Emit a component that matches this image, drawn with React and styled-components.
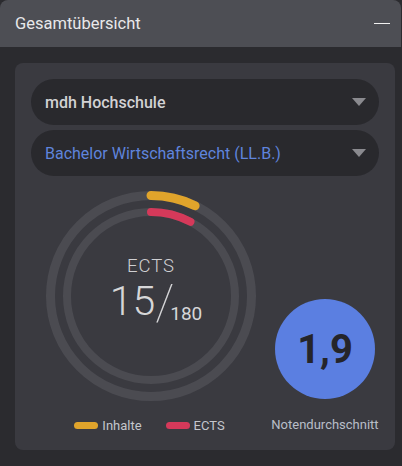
import React from "react";
import styled, { createGlobalStyle } from "styled-components";

const Global = createGlobalStyle`
  html, body { margin: 0; padding: 0; background: #2b2b2f; }
  body { font-family: Roboto, "Noto Sans", sans-serif; width: 402px; height: 466px; overflow: hidden; }
`;

const Panel = styled.div`
  width: 401px;
  height: 466px;
  background: #2b2b2f;
  border-radius: 8px 8px 0 0;
  overflow: hidden;
  display: flex;
  flex-direction: column;
`;

const Header = styled.div`
  height: 47px;
  flex: none;
  background: #4d4e54;
  display: flex;
  align-items: center;
  justify-content: space-between;
  padding: 0 11px 0 15px;
`;

const Title = styled.span`
  color: #e8e8ea;
  font-size: 16.5px;
  font-weight: 400;
  margin-top: -1px;
`;

const Minimize = styled.button`
  width: 16px;
  height: 16px;
  padding: 0;
  border: 0;
  background: transparent;
  display: flex;
  align-items: center;
  cursor: pointer;
  &::before {
    content: "";
    display: block;
    width: 16px;
    height: 1.5px;
    background: #f0f0f0;
  }
`;

const Body = styled.div`
  padding: 16px 6px 0 15px;
`;

const Card = styled.div`
  background: #3a3a40;
  border-radius: 8px;
  padding: 16px 16px 17px 16px;
  display: flex;
  flex-direction: column;
`;

const Select = styled.div`
  height: 46px;
  border-radius: 23px;
  background: #29292d;
  display: flex;
  align-items: center;
  justify-content: space-between;
  padding: 0 13px 0 14px;
  margin-bottom: ${(p) => (p.$last ? "0" : "5px")};
  color: ${(p) => (p.$accent ? "#5f84dc" : "#d2d2d4")};
  font-size: 16px;
  font-weight: ${(p) => (p.$accent ? 400 : 500)};
`;

const Caret = styled.span`
  width: 0;
  height: 0;
  border-left: 7.5px solid transparent;
  border-right: 7.5px solid transparent;
  border-top: 8px solid #8a8a8f;
`;

const Stats = styled.div`
  display: grid;
  grid-template-columns: 240px 108px;
  align-items: end;
  margin-top: 15px;
`;

const Column = styled.div`
  display: flex;
  flex-direction: column;
  align-items: center;
  gap: ${(p) => p.$gap}px;
`;

const RingWrap = styled.div`
  position: relative;
  width: 210px;
  height: 210px;
  display: flex;
  flex-direction: column;
  align-items: center;
  justify-content: center;
  padding-bottom: 6px;
  box-sizing: border-box;
  svg { position: absolute; inset: 0; }
`;

const RingLabel = styled.div`
  position: relative;
  color: #cfcfd2;
  font-size: 18.5px;
  font-weight: 300;
  letter-spacing: 1px;
  line-height: 20px;
`;

const RingValue = styled.div`
  position: relative;
  color: #d6d6d8;
  font-weight: 300;
  display: flex;
  align-items: baseline;
  line-height: 44px;
  margin-left: 10px;
`;

const Big = styled.span`
  font-size: 41px;
`;

const Slash = styled.span`
  font-size: 50px;
  font-weight: 100;
  position: relative;
  top: 5px;
  letter-spacing: -4px;
`;

const Small = styled.span`
  font-size: 19px;
  font-weight: 400;
  position: relative;
  top: 5px;
`;

const Legend = styled.div`
  display: flex;
  align-items: center;
  gap: 24px;
  height: 16px;
  margin-left: -3px;
`;

const LegendItem = styled.span`
  display: flex;
  align-items: center;
  gap: 4px;
  color: #c4c6cc;
  font-size: 13px;
  &::before {
    content: "";
    width: 24px;
    height: 7px;
    border-radius: 4px;
    background: ${(p) => p.$color};
  }
`;

const Grade = styled.div`
  width: 100px;
  height: 100px;
  border-radius: 50%;
  background: #5b7fe1;
  color: #25252a;
  font-size: 40px;
  font-weight: 700;
  display: flex;
  align-items: center;
  justify-content: center;
`;

const Caption = styled.span`
  color: #b8bec8;
  font-size: 13px;
  line-height: 16px;
  white-space: nowrap;
`;

function arc(cx, cy, r, deg) {
  const a = (deg * Math.PI) / 180;
  const x = cx + r * Math.sin(a);
  const y = cy - r * Math.cos(a);
  return `M ${cx} ${cy - r} A ${r} ${r} 0 0 1 ${x.toFixed(2)} ${y.toFixed(2)}`;
}

function Ring() {
  return (
    <svg width="210" height="210" viewBox="0 0 210 210">
      <circle cx="105" cy="105" r="100.5" fill="none" stroke="#4b4b51" strokeWidth="9" />
      <circle cx="105" cy="105" r="84" fill="none" stroke="#4b4b51" strokeWidth="8" />
      <path d={arc(105, 105, 100.5, 26)} fill="none" stroke="#e0a42b" strokeWidth="9" strokeLinecap="round" />
      <path d={arc(105, 105, 84, 28)} fill="none" stroke="#d5395a" strokeWidth="8" strokeLinecap="round" />
    </svg>
  );
}

export default function App() {
  return (
    <>
      <Global />
      <Panel>
        <Header>
          <Title>Gesamtübersicht</Title>
          <Minimize aria-label="minimieren" />
        </Header>
        <Body>
          <Card>
            <Select>
              mdh Hochschule
              <Caret />
            </Select>
            <Select $accent $last>
              Bachelor Wirtschaftsrecht (LL.B.)
              <Caret />
            </Select>
            <Stats>
              <Column $gap={16}>
                <RingWrap>
                  <Ring />
                  <RingLabel>ECTS</RingLabel>
                  <RingValue>
                    <Big>15</Big>
                    <Slash>/</Slash>
                    <Small>180</Small>
                  </RingValue>
                </RingWrap>
                <Legend>
                  <LegendItem $color="#e0a42b">Inhalte</LegendItem>
                  <LegendItem $color="#d5395a">ECTS</LegendItem>
                </Legend>
              </Column>
              <Column $gap={18}>
                <Grade>1,9</Grade>
                <Caption>Notendurchschnitt</Caption>
              </Column>
            </Stats>
          </Card>
        </Body>
      </Panel>
    </>
  );
}
